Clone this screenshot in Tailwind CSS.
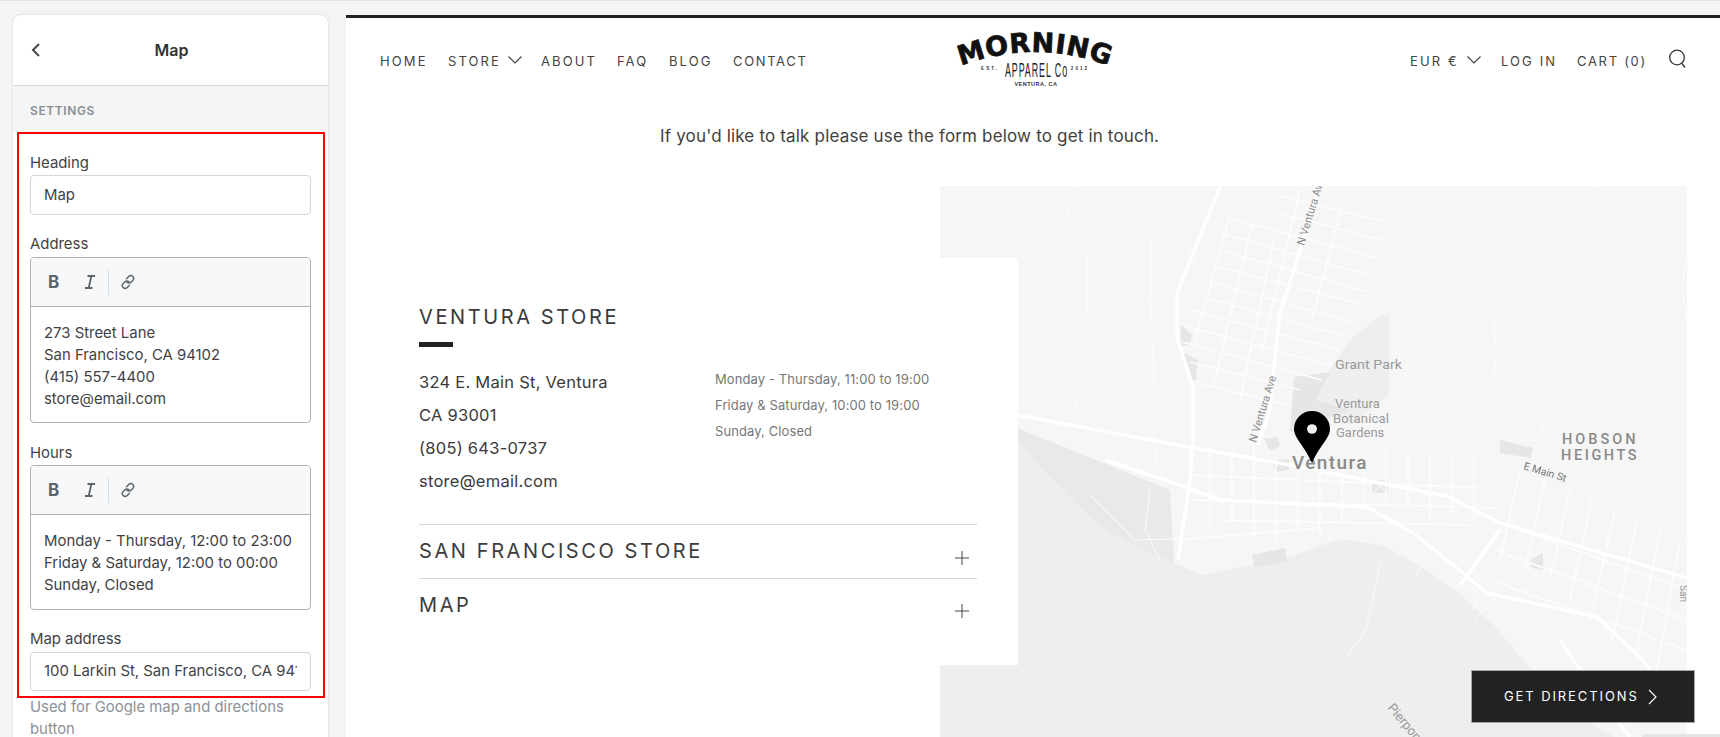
<!DOCTYPE html>
<html>
<head>
<meta charset="utf-8">
<script src="https://cdn.jsdelivr.net/npm/@tailwindcss/browser@4"></script>
</head>
<body class="h-[737px] w-[1720px] overflow-hidden bg-[#f4f4f4] font-['Inter','Liberation_Sans',sans-serif]">
<div class="flex h-[737px] border-t border-[#e2e2e2]">

  <aside class="ml-[13px] mt-[14px] h-[760px] w-[315px] shrink-0 rounded-t-[8px] bg-white shadow-[0_0_2px_rgba(0,0,0,0.18)] text-[#3f4246]">
    <div class="relative flex h-[71px] items-center justify-center border-b border-[#d9dbdd]">
      <svg class="absolute left-[17px] top-[27px]" width="12" height="16" viewBox="0 0 12 16" fill="none" stroke="#44474a" stroke-width="2"><path d="M9 2 3 8l6 6"/></svg>
      <span class="ml-[2px] text-[16px] font-semibold text-[#303336]">Map</span>
    </div>
    <div class="flex h-[46px] items-center bg-[#f4f5f5] pl-[17px] pt-[4px] text-[12px] font-semibold tracking-[0.6px] text-[#8b8f93]">SETTINGS</div>
    <div class="ml-[4px] mr-[3px] h-[566px] border-2 border-[#ff0000] pl-[11px] pr-[12px] text-[14.900px]">
      <div class="pt-[18px] leading-[22px]">Heading</div>
      <div class="mt-[1px] flex h-[40px] items-center rounded-[4px] border border-[#d4d6d8] pl-[13px]">Map</div>
      <div class="mt-[18px] leading-[22px]">Address</div>
      <div class="mt-[2px] h-[166px] rounded-[4px] border border-[#aeb3b8] overflow-hidden">
        <div class="flex h-[49px] items-center border-b border-[#aeb3b8] bg-[#f6f8fa] pl-[17px]">
          <span class="w-[14px] text-[17px] font-bold leading-none text-[#5e6368]">B</span>
          <svg class="ml-[23px]" width="10" height="14" viewBox="0 0 10 14" fill="none" stroke="#5e6368" stroke-width="1.800"><path d="M2.500 1H10M0 13h7.500M6.300 1 3.700 13"/></svg>
          <span class="ml-[13px] h-[25px] w-px bg-[#d8dde2]"></span>
          <svg class="ml-[11px]" width="16" height="16" viewBox="0 0 16 16" fill="none" stroke="#5e6368" stroke-width="1.400" stroke-linecap="round"><path d="M6.500 4.800 8.800 2.500a2.800 2.800 0 0 1 4 4L11 8.300a2.800 2.800 0 0 1-4 0M9.500 11.200 7.200 13.500a2.800 2.800 0 0 1-4-4L5 7.700a2.800 2.800 0 0 1 4 0"/></svg>
        </div>
        <div class="pl-[13px] pt-[15px] leading-[22px]">273 Street Lane<br>San Francisco, CA 94102<br>(415) 557-4400<br>store@email.com</div>
      </div>
      <div class="mt-[19px] leading-[22px]">Hours</div>
      <div class="mt-[1px] h-[145px] rounded-[4px] border border-[#aeb3b8] overflow-hidden">
        <div class="flex h-[49px] items-center border-b border-[#aeb3b8] bg-[#f6f8fa] pl-[17px]">
          <span class="w-[14px] text-[17px] font-bold leading-none text-[#5e6368]">B</span>
          <svg class="ml-[23px]" width="10" height="14" viewBox="0 0 10 14" fill="none" stroke="#5e6368" stroke-width="1.800"><path d="M2.500 1H10M0 13h7.500M6.300 1 3.700 13"/></svg>
          <span class="ml-[13px] h-[25px] w-px bg-[#d8dde2]"></span>
          <svg class="ml-[11px]" width="16" height="16" viewBox="0 0 16 16" fill="none" stroke="#5e6368" stroke-width="1.400" stroke-linecap="round"><path d="M6.500 4.800 8.800 2.500a2.800 2.800 0 0 1 4 4L11 8.300a2.800 2.800 0 0 1-4 0M9.500 11.200 7.200 13.500a2.800 2.800 0 0 1-4-4L5 7.700a2.800 2.800 0 0 1 4 0"/></svg>
        </div>
        <div class="whitespace-nowrap pl-[13px] pt-[15px] leading-[22px]">Monday - Thursday, 12:00 to 23:00<br>Friday &amp; Saturday, 12:00 to 00:00<br>Sunday, Closed</div>
      </div>
      <div class="mt-[18px] leading-[22px]">Map address</div>
      <div class="mt-[2px] flex h-[39px] items-center rounded-[4px] border border-[#d4d6d8] pl-[13px] pr-[13px]"><span class="block overflow-hidden whitespace-nowrap">100 Larkin St, San Francisco, CA 94102</span></div>
    </div>
    <div class="mt-[-2px] pl-[17px] pr-[20px] text-[14.900px] leading-[22px] text-[#8c9196]">Used for Google map and directions button</div>
  </aside>

  <main class="ml-[18px] mt-[14px] h-[760px] flex-1 border-t-[3px] border-[#222222] bg-white text-[#3c3c3c]">
    <header class="flex h-[84px] items-center pl-[34px] pr-[33px] pt-[4px] text-[13px] tracking-[2.1px] text-[#444444]">
      <nav class="flex w-[460px] shrink-0 items-center">
        <span class="w-[68px] shrink-0">HOME</span>
        <span class="flex w-[93px] shrink-0 items-center">STORE<svg class="ml-[7px] mt-[-4px]" width="14" height="8" viewBox="0 0 14 8" fill="none" stroke="#444" stroke-width="1.200"><path d="M.500.500 7 7l6.500-6.500"/></svg></span>
        <span class="w-[76px] shrink-0">ABOUT</span>
        <span class="w-[52px] shrink-0">FAQ</span>
        <span class="w-[64px] shrink-0">BLOG</span>
        <span class="shrink-0 whitespace-nowrap tracking-[1.650px]">CONTACT</span>
      </nav>
      <svg class="ml-[115px] mt-[-4px] shrink-0" width="160" height="60" viewBox="0 0 160 60">
        <defs><path id="arc" d="M3 37 Q80 7 157 37"/></defs>
        <text font-family="DejaVu Sans" font-weight="700" font-size="27" fill="#111" stroke="#111" stroke-width="0.700" text-anchor="middle" letter-spacing="0.500"><textPath href="#arc" startOffset="50%">MORNING</textPath></text>
        <text x="81.500" y="47" font-family="Liberation Sans" font-size="20" fill="#222" text-anchor="middle" textLength="63" lengthAdjust="spacingAndGlyphs">APPAREL Co</text>
        <text x="35" y="40" font-family="Liberation Sans" font-weight="700" font-size="4.500" fill="#333" text-anchor="middle">EST.</text>
        <text x="125" y="40" font-family="Liberation Sans" font-weight="700" font-size="4.500" fill="#333" text-anchor="middle">2012</text>
        <text x="81" y="56" font-family="Liberation Sans" font-weight="700" font-size="5.500" fill="#333" text-anchor="middle" letter-spacing="0.500">VENTURA, CA</text>
      </svg>
      <div class="ml-auto flex items-center">
        <span class="flex w-[91px] items-center whitespace-nowrap">EUR €<svg class="ml-[8px] mt-[-4px]" width="14" height="8" viewBox="0 0 14 8" fill="none" stroke="#444" stroke-width="1.200"><path d="M.500.500 7 7l6.500-6.500"/></svg></span>
        <span class="w-[76px] whitespace-nowrap">LOG IN</span>
        <span class="w-[91px] whitespace-nowrap tracking-[1.700px]">CART (0)</span>
        <svg class="mt-[-7px]" width="19" height="19" viewBox="0 0 19 19" fill="none" stroke="#333" stroke-width="1.300"><circle cx="9" cy="8.500" r="7.300"/><path d="m13.500 14 3.500 4.500"/></svg>
      </div>
    </header>

    <p class="ml-[314px] mt-[22px] h-[24px] whitespace-nowrap text-[17px] leading-[24px] tracking-[0.17px] text-[#3f3f3f]">If you'd like to talk please use the form below to get in touch.</p>

    <section class="relative ml-[594px] mt-[38px] h-[551px] w-[747px]">
      <svg class="absolute inset-0" width="747" height="551" viewBox="940 186 747 551">
        <rect x="940" y="186" width="747" height="551" fill="#eeeeee"/>
        <path d="M940 186H1687V737H1615L1597 727 1551 693 1523 660 1496 627 1459 593 1422 567 1381 545 1340 539 1294 555 1252 565 1202 575 1174 563 1138 548 1101 527 1069 497 1034 460 1017 440 940 400Z" fill="#f6f6f6"/>
        <path d="M1017 428 1170 490 1174 563 1138 548 1101 527 1069 497 1034 460 1017 440Z" fill="#e9e9e9"/>
        <path d="M1381 315H1389V395L1350 425 1316 400 1330 370 1350 340Z" fill="#eeeeee"/>
        <g fill="#e6e6e6">
          <path d="M1294 377 1330 372 1316 400 1350 410 1310 425 1290 432Z"/>
          <path d="M1181 325 1192 335 1190 345 1181 346Z"/>
          <path d="M1184 353 1198 360 1195 384 1190 380Z"/>
          <path d="M1500 440 1533 448 1531 458 1500 453Z"/>
          <path d="M1252 555 1285 548 1287 562 1254 567Z"/>
          <path d="M1530 560 1543 553 1543 570 1532 568Z"/>
          <path d="M1271 461 1289 459 1289 470 1277 472Z"/>
          <path d="M1264 439 1278 437 1280 446 1270 451Z"/>
          <path d="M1372 480H1388V493H1372Z"/>
        </g>
        <g fill="none" stroke="#fcfcfc" stroke-width="1">
          <path d="M1078 190 1067 213 1087 253V313L1110 337 1087 367 1073 413 1068 425"/>
          <path d="M1179 187 1151 240V297L1156 470"/>
          <path d="M1601 190 1542 247 1505 283 1494 313 1496 353 1493 400"/>
          <path d="M1687 250 1682 290 1687 320"/>
          <path d="M1420 390 1425 420 1415 440M1440 420 1410 450 1420 440"/>
          <path d="M1540 410 1545 440 1515 440M1600 460 1620 425 1687 380"/>
          <path d="M1090 495 1135 540 1174 539M1150 490 1145 530 1160 560"/>
          <path d="M1381 560 1366 630 1346 657"/>
          <path d="M1422 567 1416 575M1476 600 1473 610M1495 600 1474 620"/>
          <path d="M1500 550 1530 570 1600 620 1640 680M1480 590 1530 620 1570 650"/>
          <path d="M1372 480 1388 493M1388 480 1372 493"/>
        </g>
        <g fill="none" stroke="#fdfdfd" stroke-width="1.600">
          <path d="M1280 196 1385 222M1275 212 1382 240M1228 218 1378 258M1224 234 1372 276M1220 250 1368 292M1216 266 1360 304M1210 282 1352 322M1206 298 1345 336M1190 310 1340 350M1186 326 1332 366M1182 342 1322 380M1190 362 1300 390M1188 380 1285 405"/>
          <path d="M1300 190 1262 350M1342 205 1312 320M1230 215 1195 340M1252 225 1215 380M1275 235 1240 400"/>
          <path d="M1190 475 1480 488M1190 500 1500 508M1220 520 1470 525M1174 540 1320 528"/>
          <path d="M1210 445V530M1232 445V520M1254 445V540M1276 460V540M1298 470V530M1320 470V535M1342 470V525M1364 470V510M1386 450V505M1408 455V510M1430 455V525M1452 455V515M1474 455V520"/>
          <path d="M1520 470 1500 560M1545 480 1525 570M1570 490 1550 580M1592 500 1570 600M1615 510 1590 620M1637 520 1612 640M1660 530 1635 660M1680 540 1655 680"/>
          <path d="M1500 523 1687 590M1495 550 1687 620M1490 580 1687 650"/>
        </g>
        <g fill="none" stroke="#ffffff" stroke-width="3.500" stroke-linejoin="round">
          <path d="M1319 186 1298 257 1280 313 1269 413 1258 445"/>
          <path d="M1220 187 1177 293V337L1193 387V440L1190 480 1178 560"/>
          <path d="M1017 415 1188 447 1290 465 1450 497 1500 523 1687 578"/>
          <path d="M1105 460 1174 483 1220 500 1367 507 1413 533 1459 570 1487 593 1597 617 1643 660 1687 720"/>
          <path d="M1500 530 1460 585"/>
          <path d="M1560 640 1600 700 1630 737"/>
        </g>
        <g font-family="Roboto" fill="#9a9a9a" font-size="13">
          <text x="1335" y="369" textLength="67" lengthAdjust="spacingAndGlyphs">Grant Park</text>
          <text x="1335" y="408">Ventura</text>
          <text x="1333" y="423" textLength="56">Botanical</text>
          <text x="1336" y="437">Gardens</text>
          <text x="1292" y="469" font-size="19" font-weight="500" letter-spacing="1.400" fill="#8a8a8a">Ventura</text>
          <text x="1562" y="444" font-size="14.500" font-weight="500" letter-spacing="3" fill="#8a8a8a">HOBSON</text>
          <text x="1561" y="460" font-size="14.500" font-weight="500" letter-spacing="2.600" fill="#8a8a8a">HEIGHTS</text>
          <text transform="translate(1523 469) rotate(17)" font-size="10.500" fill="#777">E Main St</text>
          <text transform="translate(1304 246) rotate(-73)" font-size="11" fill="#8a8a8a">N Ventura Ave</text>
          <text transform="translate(1256 443) rotate(-73)" font-size="11" fill="#8a8a8a">N Ventura Ave</text>
          <text transform="translate(1387 708) rotate(50)" font-size="13" fill="#999">Pierpont</text>
          <text transform="translate(1680 585) rotate(90)" font-size="10" fill="#999">San</text>
        </g>
        <path d="M1312 463C1304 445 1294 438 1294 429A18 18 0 0 1 1330 429C1330 438 1320 445 1312 463Z" fill="#000"/>
        <ellipse cx="1312" cy="429" rx="5" ry="4.800" fill="#eeeeee"/>
      </svg>

      <div class="absolute left-[-594px] top-[72px] h-[407px] w-[672px] bg-white pl-[73px] pt-[45px]">
        <div class="text-[20px] leading-[28px] tracking-[2.6px] text-[#3a3a3a]">VENTURA STORE</div>
        <div class="mt-[11px] h-[5px] w-[34px] bg-[#222222]"></div>
        <div class="mt-[19px] flex">
          <div class="w-[296px] text-[16.500px] leading-[33px] tracking-[0.25px] text-[#3a3a3a]">324 E. Main St, Ventura<br>CA 93001<br>(805) 643-0737<br>store@email.com</div>
          <div class="whitespace-nowrap text-[13px] leading-[26px] tracking-[0.1px] text-[#777777]">Monday - Thursday, 11:00 to 19:00<br>Friday &amp; Saturday, 10:00 to 19:00<br>Sunday, Closed</div>
        </div>
        <div class="mt-[26px] flex h-[54px] w-[558px] justify-between border-t border-[#d5d5d5]">
          <span class="pt-[12px] text-[20px] leading-[28px] tracking-[2.6px]">SAN FRANCISCO STORE</span>
          <svg class="mr-[8px] mt-[26px]" width="14" height="14" viewBox="0 0 14 14" stroke="#444" stroke-width="1"><path d="M7 0v14M0 7h14"/></svg>
        </div>
        <div class="flex h-[54px] w-[558px] justify-between border-t border-[#d5d5d5]">
          <span class="pt-[12px] text-[20px] leading-[28px] tracking-[2.6px]">MAP</span>
          <svg class="mr-[8px] mt-[25px]" width="14" height="14" viewBox="0 0 14 14" stroke="#444" stroke-width="1"><path d="M7 0v14M0 7h14"/></svg>
        </div>
      </div>

      <div class="absolute left-[531px] top-[484px] flex h-[53px] w-[224px] items-center border border-white/60 bg-[#222222] pl-[32px] text-[13px] tracking-[1.900px] text-white">
        <span class="whitespace-nowrap">GET DIRECTIONS</span>
        <svg class="ml-[9px]" width="10" height="16" viewBox="0 0 10 16" fill="none" stroke="#fff" stroke-width="1.200"><path d="M1 1l7 7-7 7"/></svg>
      </div>
    </section>
  </main>
</div>
<div class="absolute left-[1642px] top-[734px] h-[10px] w-[78px] rounded-tl-[4px] bg-[#e4e4e4]"></div>
</body>
</html>
